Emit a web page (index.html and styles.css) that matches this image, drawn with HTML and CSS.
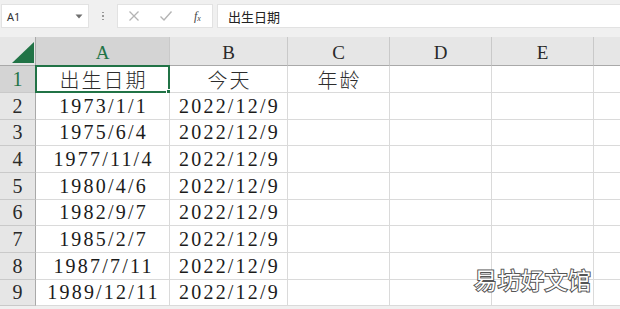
FILE: index.html
```html
<!DOCTYPE html>
<html lang="zh">
<head>
<meta charset="utf-8">
<title>Sheet</title>
<link rel="stylesheet" href="styles.css">
</head>
<body>
<div class="app">
  <div class="formula-bar">
    <div class="namebox">
      <span class="ref">A1</span>
      <svg class="caret" width="8" height="5" viewBox="0 0 8 5"><path d="M0.5 0.5 L7.5 0.5 L4 4.5 Z" fill="#6f6f6f"/></svg>
    </div>
    <div class="dots"><i></i><i></i><i></i></div>
    <div class="fx-buttons">
      <svg class="btn-icon" width="12" height="12" viewBox="0 0 12 12"><path d="M1.5 1.5 L10.5 10.5 M10.5 1.5 L1.5 10.5" stroke="#b4b4b4" stroke-width="1.3" fill="none"/></svg>
      <svg class="btn-icon" width="14" height="12" viewBox="0 0 14 12"><path d="M1.5 6.5 L5 10 L12.5 1.5" stroke="#b4b4b4" stroke-width="1.4" fill="none"/></svg>
      <span class="fx">f<sub>x</sub></span>
    </div>
    <div class="formula-input">出生日期</div>
  </div>

  <div class="sheet">
    <div class="cell corner"><svg width="22" height="21" viewBox="0 0 22 21"><path d="M22 0 L22 21 L0 21 Z" fill="#217346"/></svg></div>
    <div class="cell hd sel">A</div>
    <div class="cell hd">B</div>
    <div class="cell hd">C</div>
    <div class="cell hd">D</div>
    <div class="cell hd">E</div>
    <div class="cell hd last"></div>

    <div class="cell rh sel">1</div>
    <div class="cell cjk active">出生日期<span class="selbox"><span class="handle"></span></span></div>
    <div class="cell cjk">今天</div>
    <div class="cell cjk">年龄</div>
    <div class="cell"></div><div class="cell"></div><div class="cell last"></div>

    <div class="cell rh">2</div>
    <div class="cell num">1973/1/1</div><div class="cell num">2022/12/9</div>
    <div class="cell"></div><div class="cell"></div><div class="cell"></div><div class="cell last"></div>

    <div class="cell rh">3</div>
    <div class="cell num">1975/6/4</div><div class="cell num">2022/12/9</div>
    <div class="cell"></div><div class="cell"></div><div class="cell"></div><div class="cell last"></div>

    <div class="cell rh">4</div>
    <div class="cell num">1977/11/4</div><div class="cell num">2022/12/9</div>
    <div class="cell"></div><div class="cell"></div><div class="cell"></div><div class="cell last"></div>

    <div class="cell rh">5</div>
    <div class="cell num">1980/4/6</div><div class="cell num">2022/12/9</div>
    <div class="cell"></div><div class="cell"></div><div class="cell"></div><div class="cell last"></div>

    <div class="cell rh">6</div>
    <div class="cell num">1982/9/7</div><div class="cell num">2022/12/9</div>
    <div class="cell"></div><div class="cell"></div><div class="cell"></div><div class="cell last"></div>

    <div class="cell rh">7</div>
    <div class="cell num">1985/2/7</div><div class="cell num">2022/12/9</div>
    <div class="cell"></div><div class="cell"></div><div class="cell"></div><div class="cell last"></div>

    <div class="cell rh">8</div>
    <div class="cell num">1987/7/11</div><div class="cell num">2022/12/9</div>
    <div class="cell"></div><div class="cell"></div><div class="cell"></div><div class="cell last"></div>

    <div class="cell rh">9</div>
    <div class="cell num">1989/12/11</div><div class="cell num">2022/12/9</div>
    <div class="cell"></div><div class="cell"></div><div class="cell"></div><div class="cell last"></div>
  </div>

  <div class="watermark">易坊好文馆</div>
</div>
</body>
</html>
```

FILE: styles.css
```css
html, body {
  margin: 0;
  padding: 0;
  background: #ffffff;
}
.app {
  position: relative;
  width: 620px;
  height: 309px;
  overflow: hidden;
  background: #f0f0f0;
}
.formula-bar {
  display: flex;
  align-items: stretch;
  height: 37px;
  box-sizing: border-box;
  padding: 4px 0 9px 1px;
  background: #f0f0f0;
}
.namebox {
  width: 88px;
  box-sizing: border-box;
  background: #fff;
  border: 1px solid #e2e2e2;
  display: flex;
  align-items: center;
  justify-content: space-between;
  padding: 0 5px 0 5px;
}
.ref {
  font-family: "Noto Sans", "Liberation Sans", sans-serif;
  font-size: 11px;
  color: #333;
}
.caret { margin-top: 1px; }
.dots {
  width: 28px;
  display: flex;
  flex-direction: column;
  align-items: center;
  justify-content: center;
  gap: 2px;
}
.dots i {
  display: block;
  width: 1.5px;
  height: 1.5px;
  background: #9a9a9a;
}
.fx-buttons {
  width: 96px;
  box-sizing: border-box;
  background: #fff;
  border: 1px solid #e2e2e2;
  display: flex;
  align-items: center;
  padding: 0 0 0 10px;
  gap: 19px;
}
.fx {
  font-family: "Liberation Serif", serif;
  font-style: italic;
  font-size: 12px;
  color: #444;
  margin-left: 2px;
}
.fx sub { font-size: 8px; vertical-align: -1px; }
.formula-input {
  flex: 1;
  margin-left: 4px;
  background: #fff;
  border: 1px solid #e2e2e2;
  border-right: none;
  font-family: "Noto Sans CJK SC", sans-serif;
  font-size: 13px;
  color: #222;
  display: flex;
  align-items: center;
  padding-left: 10px;
}
.sheet {
  display: grid;
  grid-template-columns: 36px 134px 118px 102px 102px 102px 26px;
  grid-template-rows: 29px 27px 27px 26px 27px 27px 26px 27px 27px 26px;
  background: #fff;
}
.cell {
  position: relative;
  box-sizing: border-box;
  border-right: 1px solid #dadada;
  border-bottom: 1px solid #dadada;
  display: flex;
  align-items: center;
  justify-content: center;
  background: #fff;
  color: #1b1b1b;
  white-space: nowrap;
}
.cell.last { border-right: none; }
.corner {
  background: #e6e6e6;
  border-right: 1px solid #a9a9a9;
  border-bottom: 1px solid #a9a9a9;
  align-items: flex-end;
  justify-content: flex-end;
  padding: 0 1px 2px 0;
}
.hd {
  background: #e6e6e6;
  border-right-color: #c9c9c9;
  border-bottom-color: #a9a9a9;
  font-family: "Liberation Serif", serif;
  font-size: 19px;
  color: #2a2a2a;
  padding-top: 3px;
}
.rh {
  background: #e6e6e6;
  border-right-color: #a9a9a9;
  border-bottom-color: #c9c9c9;
  font-family: "Liberation Serif", serif;
  font-size: 20px;
  color: #2a2a2a;
}
.hd.sel, .rh.sel {
  background: #d4d4d4;
  color: #217346;
}
.num {
  font-family: "Liberation Serif", serif;
  font-size: 20px;
  letter-spacing: 2.2px;
  padding-left: 2px;
}
.cjk {
  font-family: "Noto Sans CJK SC", sans-serif;
  font-size: 20px;
  font-weight: 300;
  letter-spacing: 2px;
  padding-left: 2px;
  color: #2c2c2c;
}
.selbox {
  position: absolute;
  left: -1px;
  top: -1px;
  right: -1px;
  bottom: -1px;
  border: 2px solid #217346;
}
.handle {
  position: absolute;
  right: -5px;
  bottom: -5px;
  width: 5px;
  height: 5px;
  background: #217346;
  border: 1px solid #fff;
}
.watermark {
  position: absolute;
  left: 474px;
  top: 262px;
  font-family: "Noto Sans CJK SC", sans-serif;
  font-size: 23px;
  letter-spacing: 0.5px;
  color: #ffffff;
  -webkit-text-stroke: 2px #555;
  paint-order: stroke fill;
}
```
